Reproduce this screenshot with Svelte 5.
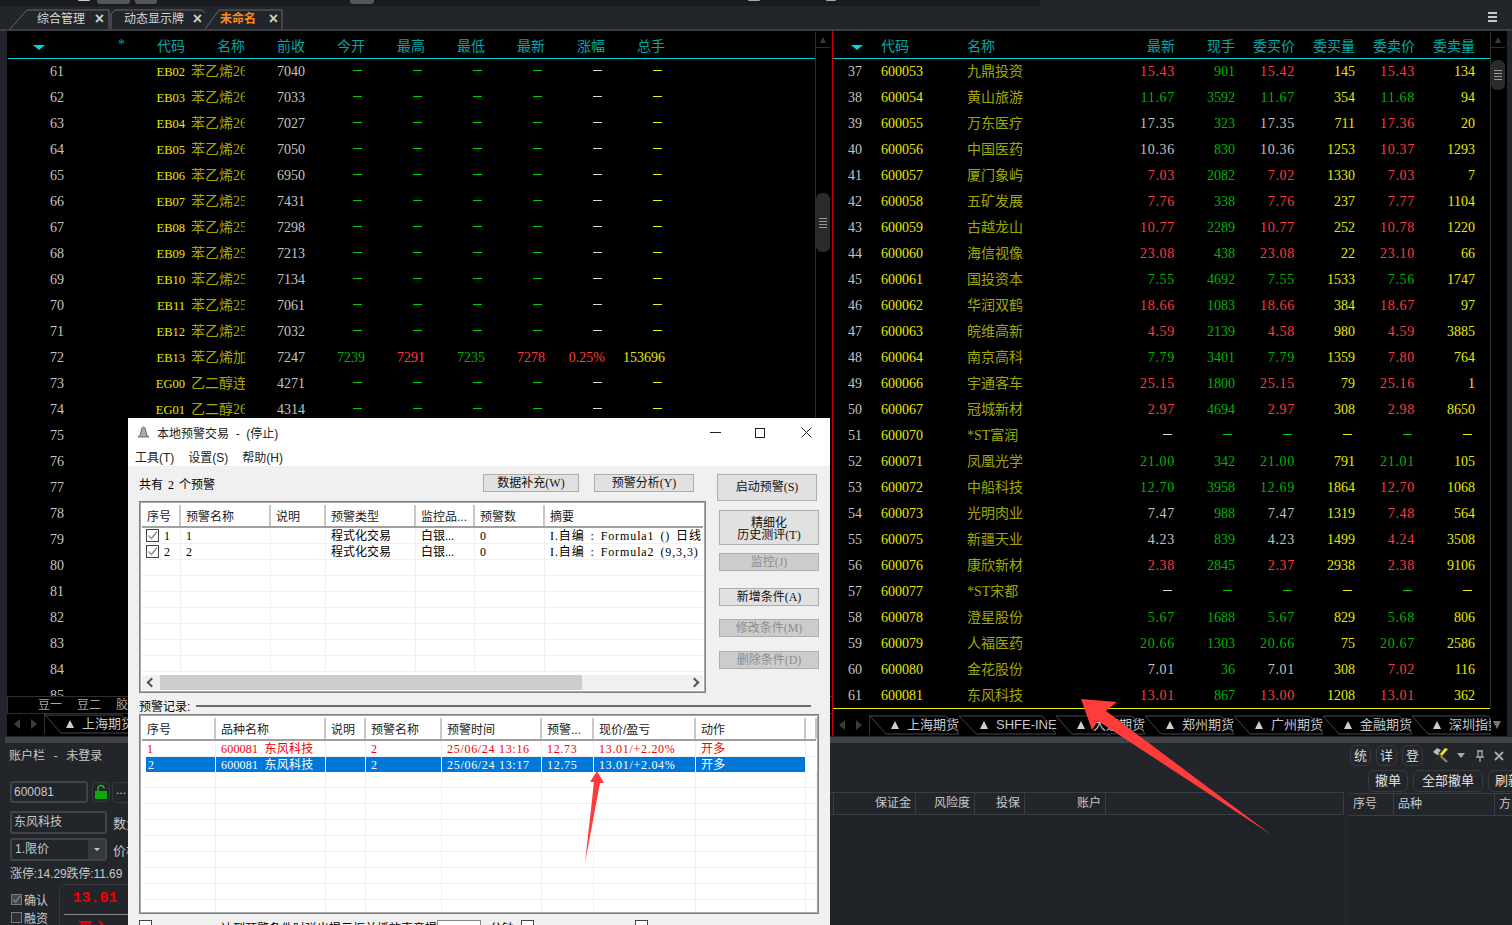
<script>
	const leftPrev = [7040, 7033, 7027, 7050, 6950, 7431, 7298, 7213, 7134, 7061, 7032, 7247, 4271, 4314];
	const leftCodes = ['EB02', 'EB03', 'EB04', 'EB05', 'EB06', 'EB07', 'EB08', 'EB09', 'EB10', 'EB11', 'EB12', 'EB13', 'EG00', 'EG01'];
	const leftNames = ['苯乙烯26', '苯乙烯26', '苯乙烯26', '苯乙烯26', '苯乙烯26', '苯乙烯25', '苯乙烯25', '苯乙烯25', '苯乙烯25', '苯乙烯25', '苯乙烯25', '苯乙烯加', '乙二醇连', '乙二醇26'];
	const leftHead = ['前收', '今开', '最高', '最低', '最新', '涨幅', '总手'];
	const leftRows = Array.from({ length: 25 }, (_, i) => ({
		n: 61 + i,
		code: leftCodes[i],
		name: leftNames[i],
		prev: leftPrev[i]
	}));

	// n, code, name, latest, now, bid, bidVol, ask, askVol, colours of latest/bid/ask
	const rightRows = [
		[37, '600053', '九鼎投资', '15.43', '901', '15.42', '145', '15.43', '134', 'rrr'],
		[38, '600054', '黄山旅游', '11.67', '3592', '11.67', '354', '11.68', '94', 'ggg'],
		[39, '600055', '万东医疗', '17.35', '323', '17.35', '711', '17.36', '20', 'wwr'],
		[40, '600056', '中国医药', '10.36', '830', '10.36', '1253', '10.37', '1293', 'wwr'],
		[41, '600057', '厦门象屿', '7.03', '2082', '7.02', '1330', '7.03', '7', 'rrr'],
		[42, '600058', '五矿发展', '7.76', '338', '7.76', '237', '7.77', '1104', 'rrr'],
		[43, '600059', '古越龙山', '10.77', '2289', '10.77', '252', '10.78', '1220', 'rrr'],
		[44, '600060', '海信视像', '23.08', '438', '23.08', '22', '23.10', '66', 'rrr'],
		[45, '600061', '国投资本', '7.55', '4692', '7.55', '1533', '7.56', '1747', 'ggg'],
		[46, '600062', '华润双鹤', '18.66', '1083', '18.66', '384', '18.67', '97', 'rrr'],
		[47, '600063', '皖维高新', '4.59', '2139', '4.58', '980', '4.59', '3885', 'rrr'],
		[48, '600064', '南京高科', '7.79', '3401', '7.79', '1359', '7.80', '764', 'ggr'],
		[49, '600066', '宇通客车', '25.15', '1800', '25.15', '79', '25.16', '1', 'rrr'],
		[50, '600067', '冠城新材', '2.97', '4694', '2.97', '308', '2.98', '8650', 'rrr'],
		[51, '600070', '*ST富润'],
		[52, '600071', '凤凰光学', '21.00', '342', '21.00', '791', '21.01', '105', 'ggg'],
		[53, '600072', '中船科技', '12.70', '3958', '12.69', '1864', '12.70', '1068', 'ggr'],
		[54, '600073', '光明肉业', '7.47', '988', '7.47', '1319', '7.48', '564', 'wwr'],
		[55, '600075', '新疆天业', '4.23', '839', '4.23', '1499', '4.24', '3508', 'wwr'],
		[56, '600076', '康欣新材', '2.38', '2845', '2.37', '2938', '2.38', '9106', 'rrr'],
		[57, '600077', '*ST宋都'],
		[58, '600078', '澄星股份', '5.67', '1688', '5.67', '829', '5.68', '806', 'ggg'],
		[59, '600079', '人福医药', '20.66', '1303', '20.66', '75', '20.67', '2586', 'ggg'],
		[60, '600080', '金花股份', '7.01', '36', '7.01', '308', '7.02', '116', 'wwr'],
		[61, '600081', '东风科技', '13.01', '867', '13.00', '1208', '13.01', '362', 'rrr']
	];

	const marketTabs = ['上海期货', 'SHFE-INE', '大连期货', '郑州期货', '广州期货', '金融期货', '深圳指数'];
	const alertCols = ['序号', '预警名称', '说明', '预警类型', '监控品...', '预警数', '摘要'];
	const alertRows = [
		['1', '1', '', '程式化交易', '白银...', '0', 'I.自编 : Formula1 () 日线'],
		['2', '2', '', '程式化交易', '白银...', '0', 'I.自编 : Formula2 (9,3,3)']
	];
	const recordCols = ['序号', '品种名称', '说明', '预警名称', '预警时间', '预警...', '现价/盈亏', '动作', ''];
	const recordRows = [
		['1', '600081  东风科技', '', '2', '25/06/24 13:16', '12.73', '13.01/+2.20%', '开多', ''],
		['2', '600081  东风科技', '', '2', '25/06/24 13:17', '12.75', '13.01/+2.04%', '开多', '']
	];
	const blank = (n, cols) => Array.from({ length: n }, () => Array(cols).fill(''));
</script>

{#snippet thumb()}
	<div class="thumb"><i></i><i></i><i></i><i></i></div>
{/snippet}

{#snippet tabStrip(tabs)}
	<div class="mtabs">
		<div class="mnav"><span class="al"></span><span class="ar"></span></div>
		{#each tabs as tab}
			<div class="mtab" class:wide={tab === 'SHFE-INE'}>
				<svg class="mshape" viewBox="0 0 100 20" preserveAspectRatio="none">
					<path d="M0 1H86L100 19H18L0 1" fill="none" stroke="#45474a" vector-effect="non-scaling-stroke" />
				</svg>
				<span class="up"></span>{tab}
			</div>
		{/each}
	</div>
{/snippet}

{#snippet tick()}
	<svg class="tick" width="11" height="11" viewBox="0 0 11 11"><path d="M1.5 5.5L4.5 8.5L10 1.5" fill="none" stroke="#8a8a8a" stroke-width="1.4" /></svg>
{/snippet}

<div class="app">
	<div class="topstrip">
		<span class="bit b1"></span><span class="bit b2"></span><span class="bit b3"></span><span class="bit b4"></span><span class="bit b5"></span><span class="bit b6"></span>
	</div>

	<div class="tabbar">
		<div class="ttab t1">
			<svg class="tshape" viewBox="0 0 100 20"><path d="M0 20L17 1H99V20" fill="none" stroke="#66686c" /></svg>
			综合管理<span class="tx">×</span>
		</div>
		<div class="ttab t2">
			<svg class="tshape" viewBox="0 0 95 20"><path d="M1 20V5L5 1H92L95 4" fill="none" stroke="#66686c" /></svg>
			动态显示牌<span class="tx">×</span>
		</div>
		<div class="ttab t3">
			<svg class="tshape" viewBox="0 0 78 20"><path d="M0 20L14 1H77V20" fill="none" stroke="#66686c" /></svg>
			未命名<span class="tx">×</span>
		</div>
		<div class="burger"><i></i><i></i><i></i></div>
	</div>

	<div class="market">
		<section class="panel left">
			<div class="panel-main">
				<div class="table">
					<div class="lrow head">
						<div class="ccell"><span class="caret"></span></div>
						<div class="star">*</div>
						<div>代码</div>
						<div>名称</div>
						{#each leftHead as h}<div>{h}</div>{/each}
					</div>
					{#each leftRows as row}
						<div class="lrow">
							<div class="num">{row.n}</div>
							<div></div>
							{#if row.code}
								<div class="code">{row.code}</div>
								<div class="name">{row.name}</div>
								<div class="num">{row.prev}</div>
								{#if row.n === 72}
									<div class="g">7239</div>
									<div class="r">7291</div>
									<div class="g">7235</div>
									<div class="r">7278</div>
									<div class="r">0.25%</div>
									<div class="y">153696</div>
								{:else}
									<div><span class="dash dg"></span></div>
									<div><span class="dash dg"></span></div>
									<div><span class="dash dg"></span></div>
									<div><span class="dash dg"></span></div>
									<div><span class="dash dw"></span></div>
									<div><span class="dash dy"></span></div>
								{/if}
							{/if}
						</div>
					{/each}
				</div>
				<div class="scroll">
					<div class="sup"><span></span></div>
					<div class="thumb-slot long">{@render thumb()}</div>
				</div>
			</div>
			<div class="subtabs"><span>豆一</span><span>豆二</span><span>胶</span></div>
			{@render tabStrip(marketTabs.slice(0, 1))}
		</section>

		<div class="redline"></div>

		<section class="panel right">
			<div class="panel-main">
				<div class="table">
					<div class="rrow head">
						<div class="ccell rc"><span class="caret"></span></div>
						<div class="code-h">代码</div>
						<div class="name-h">名称</div>
						<div>最新</div><div>现手</div><div>委买价</div><div>委买量</div><div>委卖价</div><div>委卖量</div>
					</div>
					{#each rightRows as row}
						<div class="rrow">
							<div class="num">{row[0]}</div>
							<div class="code code-c">{row[1]}</div>
							<div class="rname">{row[2]}</div>
							{#if row[3]}
								<div class="p {row[9][0]}">{row[3]}</div>
								<div class="g">{row[4]}</div>
								<div class="p {row[9][1]}">{row[5]}</div>
								<div class="y">{row[6]}</div>
								<div class="p {row[9][2]}">{row[7]}</div>
								<div class="y">{row[8]}</div>
							{:else}
								<div><span class="dash dw"></span></div>
								<div><span class="dash dg"></span></div>
								<div><span class="dash dg"></span></div>
								<div><span class="dash dy"></span></div>
								<div><span class="dash dg"></span></div>
								<div><span class="dash dy"></span></div>
							{/if}
						</div>
					{/each}
				</div>
				<div class="scroll">
					<div class="sup"><span></span></div>
					<div class="thumb-slot short">{@render thumb()}</div>
				</div>
			</div>
			<div class="yellow"></div>
			{@render tabStrip(marketTabs)}
			<span class="more"></span>
		</section>
	</div>

	<div class="splitter"></div>

	<div class="bottom">
		<div class="account">
			<div class="acc-title">账户栏 &nbsp;- &nbsp;未登录</div>
			<div class="acc-row first">
				<div class="field code-f">600081</div>
				<div class="lock">
					<svg width="14" height="16" viewBox="0 0 14 16"><path d="M4 7V4.5a3 3 0 0 1 6 0" fill="none" stroke="#18b818" stroke-width="1.6" /><rect x="1" y="7" width="12" height="8" fill="#0fa80f" /></svg>
				</div>
				<div class="dots">...</div>
			</div>
			<div class="acc-row gap8">
				<div class="field wide">东风科技</div><span class="lbl">数量</span>
			</div>
			<div class="acc-row gap4">
				<div class="field wide picker">1.限价<span class="drop"><i></i></span></div><span class="lbl">价格</span>
			</div>
			<div class="limit">涨停:14.29跌停:11.69</div>
			<div class="acc-foot">
				<div class="checks">
					<label><span class="cb on">{@render tick()}</span>确认</label>
					<label><span class="cb"></span>融资</label>
				</div>
				<div class="pricebox">
					<div class="bigp">13.01</div>
					<div class="buy">买入</div>
				</div>
			</div>
		</div>

		<div class="mid">
			<div class="mid-head">
				<div></div><div>保证金</div><div>风险度</div><div>投保</div><div>账户</div><div></div>
			</div>
			<div class="grid-body"></div>
		</div>

		<div class="side">
			<div class="side-top">
				<span class="rbtn">统</span><span class="rbtn">详</span><span class="rbtn">登</span>
				<svg class="tool" width="17" height="17" viewBox="0 0 17 17">
					<path d="M4 5L15 15" stroke="#8a8a70" stroke-width="2" />
					<path d="M1 5L5 1L9 3L5 8Z" fill="#b8b8b8" />
					<path d="M16 2L13 1L8 7L10 9Z" fill="#f0e020" />
					<path d="M8 8L3 14" stroke="#30301c" stroke-width="2.4" />
				</svg>
				<span class="side-caret"></span>
				<svg width="10" height="12" viewBox="0 0 10 12"><path d="M2 1H8M3 1V7M7 1V7M1 7H9M5 7V12" fill="none" stroke="#aaa" stroke-width="1.3" /></svg>
				<svg width="10" height="10" viewBox="0 0 10 10"><path d="M1 1L9 9M9 1L1 9" stroke="#aaa" stroke-width="1.8" /></svg>
			</div>
			<div class="side-btns">
				<span class="sbtn w40">撤单</span><span class="sbtn w70">全部撤单</span><span class="sbtn w40">刷新</span>
			</div>
			<div class="side-head"><div>序号</div><div>品种</div><div>方向</div></div>
			<div class="grid-body"></div>
		</div>
	</div>

	<div class="dialog">
		<div class="titlebar">
			<div class="title">
				<svg width="13" height="13" viewBox="0 0 13 13"><path d="M6.5 1C5 1 4.6 2.4 4.4 4L3.2 9 1 11H12L9.8 9 8.6 4C8.4 2.4 8 1 6.5 1Z" fill="#a8a8a8" stroke="#555" stroke-width=".8" /></svg>
				<span class="ttext">本地预警交易 &nbsp;- &nbsp;(停止)</span>
				<div class="winbtns">
					<span class="wmin"></span>
					<span class="wmax"></span>
					<svg width="11" height="11" viewBox="0 0 11 11"><path d="M.5 .5L10.5 10.5M10.5 .5L.5 10.5" stroke="#222" /></svg>
				</div>
			</div>
			<div class="menu"><span>工具(T)</span><span>设置(S)</span><span>帮助(H)</span></div>
		</div>

		<div class="dbody">
			<div class="dtop">
				<div class="dleft">
					<div class="count-row">
						<span class="count">共有 2 个预警</span>
						<button class="b b96">数据补充(W)</button>
						<button class="b b100">预警分析(Y)</button>
					</div>
					<div class="listbox alerts">
						<div class="lhead acols">
							{#each alertCols as c}<div>{c}</div>{/each}
						</div>
						<div class="lbody a-body">
							{#each alertRows as r}
								<div class="lr acols">
									<div><span class="chk">{@render tick()}</span>{r[0]}</div>
									{#each r.slice(1, 6) as c}<div>{c}</div>{/each}
									<div class="formula">{r[6]}</div>
								</div>
							{/each}
							{#each blank(7, 7) as r}
								<div class="lr acols">{#each r as c}<div>{c}</div>{/each}</div>
							{/each}
						</div>
						<div class="hbar">
							<span class="ha hl"></span>
							<div class="htrack"><div class="hthumb"></div></div>
							<span class="ha hr"></span>
						</div>
					</div>
				</div>
				<div class="dright">
					<button class="b start">启动预警(S)</button>
					<button class="b fine">精细化<br />历史测评(T)</button>
					<button class="b act off m8">监控(J)</button>
					<button class="b act m17">新增条件(A)</button>
					<button class="b act off m13">修改条件(M)</button>
					<button class="b act off m14">删除条件(D)</button>
				</div>
			</div>

			<div class="rec-label"><span>预警记录:</span><i></i></div>
			<div class="listbox records">
				<div class="lhead rcols">
					{#each recordCols as c}<div>{c}</div>{/each}
				</div>
				<div class="lbody">
					{#each recordRows as r, i}
						<div class="lr rcols" class:red={i === 0} class:sel={i === 1}>
							{#each r as c, j}<div class="cell" class:wide-num={j >= 4 && j <= 6} class:last={j === 8}>{c}</div>{/each}
						</div>
					{/each}
					{#each blank(10, 9) as r}
						<div class="lr rcols">{#each r as c}<div>{c}</div>{/each}</div>
					{/each}
				</div>
			</div>

			<div class="dfoot">
				<span class="fchk"></span>
				<span class="ftext">达到预警条件时弹出提示框并播放声音提示</span>
				<span class="finput"></span>
				<span class="ftext2">分钟</span>
				<span class="fchk c2"></span>
				<span class="fchk c3"></span>
			</div>
		</div>
	</div>

	<!-- red annotation arrows drawn over the screenshot -->
	<svg class="notes" width="1512" height="925" viewBox="0 0 1512 925">
		<path d="M1081 699L1117 702L1106 711L1273 836L1098 721L1092 730Z" fill="#ff3b3b" />
		<path d="M597 771L604 783L600 783L585 863L594 782L590 782Z" fill="#ff3b3b" />
	</svg>
</div>

<style>
	:global(body) {
		margin: 0;
		background: #212429;
	}

	.app {
		position: relative;
		width: 1512px;
		height: 925px;
		overflow: hidden;
		background: #22252a;
		color: #c0c0c0;
		font-family: 'Liberation Serif', 'Noto Sans CJK SC', serif;
		font-size: 14px;
	}

	/* top chrome */
	.topstrip {
		position: relative;
		height: 6px;
		background: linear-gradient(90deg, #191b1f 1040px, #22252a 1040px);
	}

	.bit {
		position: absolute;
		top: 0;
		height: 3px;
		background: #55575a;
		border-radius: 0 0 3px 3px;
	}
	.b1 { left: 78px; width: 12px; height: 1px; background: #ccc; }
	.b2 { left: 97px; width: 33px; height: 4px; }
	.b3 { left: 135px; width: 22px; height: 4px; }
	.b4 { left: 350px; width: 24px; height: 4px; }
	.b5 { left: 748px; width: 12px; height: 1px; background: #aaa; }
	.b6 { left: 826px; width: 10px; height: 1px; background: #aaa; }

	.tabbar {
		display: flex;
		align-items: flex-end;
		box-sizing: border-box;
		height: 25px;
		padding: 3px 0 0 10px;
		border-bottom: 2px solid #3c3e42;
		font-family: 'Liberation Sans', 'Noto Sans CJK SC', sans-serif;
		font-size: 12px;
		color: #d8d8d8;
	}

	.ttab {
		position: relative;
		display: flex;
		align-items: center;
		box-sizing: border-box;
		height: 20px;
		line-height: 20px;
	}
	.t1 { width: 100px; padding-left: 27px; }
	.t2 { width: 95px; padding-left: 14px; }
	.t3 { width: 78px; padding-left: 15px; color: #ff8a1e; font-weight: 700; }

	.tshape {
		position: absolute;
		left: 0;
		top: 0;
		width: 100%;
		height: 100%;
	}

	.tx {
		position: absolute;
		top: 0;
		right: 5px;
		color: #cfcfcf;
		font-size: 16px;
		font-weight: 700;
	}
	.t1 .tx { right: 6px; }
	.t2 .tx { right: 3px; }

	.burger {
		display: flex;
		flex-direction: column;
		gap: 2px;
		margin: 0 15px 7px auto;
	}
	.burger i {
		display: block;
		width: 9px;
		height: 2px;
		background: #c8c8c8;
	}

	/* market tables */
	.market {
		display: flex;
		height: 705px;
		padding-left: 7px;
	}

	.panel {
		position: relative;
		display: flex;
		flex-direction: column;
		background: #000;
		overflow: hidden;
	}
	.panel.left { width: 825px; }
	.panel.right { width: 674px; }

	.redline {
		width: 1px;
		background: #d00000;
	}

	.panel-main {
		display: flex;
		overflow: hidden;
	}
	.left .panel-main { height: 665px; }
	.right .panel-main { height: 677px; }

	.table {
		flex: 1;
		min-width: 0;
		overflow: hidden;
	}

	.lrow,
	.rrow {
		display: grid;
		height: 26px;
		line-height: 26px;
		text-align: right;
		white-space: nowrap;
	}
	.lrow { grid-template-columns: 57px 61px 60px 60px repeat(7, 60px); }
	.rrow { grid-template-columns: 29px 105px 148px repeat(6, 60px); }

	.head {
		height: 28px;
		line-height: 32px;
		box-sizing: border-box;
		border-bottom: 1px solid #00d0d8;
		color: #00a8a8;
	}
	.lrow.head { margin-left: 1px; grid-template-columns: 56px 61px 60px 60px repeat(7, 60px); }

	.ccell {
		display: flex;
		align-items: center;
		padding-left: 25px;
	}
	.ccell.rc {
		padding-left: 18px;
	}

	.caret {
		width: 0;
		height: 0;
		margin-top: 1px;
		border-left: 6px solid transparent;
		border-right: 6px solid transparent;
		border-top: 5px solid #00d8e0;
	}

	.star {
		line-height: 27px;
		padding-right: 0;
	}

	.num { color: #c4c4c4; }
	.code { color: #e8e800; font-size: 12.5px; }
	.name {
		overflow: hidden;
		padding-left: 6px;
		color: #a8a800;
		text-align: left;
	}
	.code-h,
	.code-c { padding-left: 19px; text-align: left; }
	.code-c { font-size: 14px; }
	.name-h,
	.rname {
		text-align: left;
	}
	.rname { color: #a0a800; }

	.p { letter-spacing: .7px; }
	.r { color: #ff3c3c; }
	.g { color: #00b400; }
	.w { color: #c4c4c4; }
	.y { color: #e8e800; }

	.dash {
		display: inline-block;
		width: 9px;
		height: 1px;
		margin-right: 3px;
		vertical-align: 5px;
	}
	.dg { background: #00d000; }
	.dw { background: #d8d8d8; }
	.dy { background: #f0f000; }

	.scroll {
		box-sizing: border-box;
		flex: none;
		width: 17px;
		padding-right: 2px;
		padding-top: 1px;
	}
	.scroll .sup {
		display: flex;
		justify-content: center;
		align-items: center;
		height: 15px;
		border-left: 1px solid #2e2e2e;
		border-bottom: 1px solid #2e2e2e;
	}
	.sup span {
		width: 0;
		height: 0;
		border-left: 3px solid transparent;
		border-right: 3px solid transparent;
		border-bottom: 6px solid #3a3a3a;
	}
	.thumb-slot {
		height: 100%;
		border-left: 1px solid #2e2e2e;
	}
	.thumb-slot.long { padding-top: 145px; }
	.thumb-slot.short { padding-top: 12px; }

	.thumb {
		display: flex;
		flex-direction: column;
		justify-content: center;
		align-items: center;
		gap: 2px;
		border-radius: 6px;
		background: #2a2a2a;
	}
	.long .thumb { height: 59px; }
	.short .thumb { height: 30px; }
	.thumb i {
		display: block;
		width: 8px;
		height: 1px;
		background: #9a9a9a;
	}

	.subtabs {
		display: flex;
		gap: 15px;
		box-sizing: border-box;
		height: 18px;
		padding-left: 30px;
		border: 1px solid #2e2e2e;
		border-right: none;
		font-family: 'Liberation Sans', 'Noto Sans CJK SC', sans-serif;
		font-size: 12px;
		line-height: 16px;
		color: #a8a8a8;
		background: #000;
		position: relative;
	}

	.yellow {
		flex: none;
		height: 1px;
		background: #f0f000;
		margin-right: 17px;
		margin-bottom: 6px;
	}

	.mtabs {
		display: flex;
		height: 20px;
		font-family: 'Liberation Sans', 'Noto Sans CJK SC', sans-serif;
		font-size: 13px;
		color: #c8c8c8;
		overflow: hidden;
	}
	.left .mtabs { padding-left: 1px; }
	.right .mtabs { margin-right: 16px; }

	.mnav {
		flex: none;
		display: flex;
		align-items: center;
		gap: 11px;
		box-sizing: border-box;
		width: 37px;
		padding-left: 6px;
		border-right: 1px solid #333;
	}
	.al,
	.ar {
		width: 0;
		height: 0;
		border-top: 5px solid transparent;
		border-bottom: 5px solid transparent;
	}
	.al { border-right: 6px solid #3c3c3c; }
	.ar { border-left: 6px solid #3c3c3c; }

	.mtab {
		position: relative;
		flex: none;
		display: flex;
		align-items: center;
		box-sizing: border-box;
		width: 89px;
		padding-left: 21px;
		line-height: 20px;
		white-space: nowrap;
	}
	.mtab.wide { width: 97px; }

	.mshape {
		position: absolute;
		left: 0;
		top: 0;
		width: 100%;
		height: 100%;
	}

	.up {
		flex: none;
		width: 0;
		height: 0;
		margin-right: 8px;
		border-left: 4px solid transparent;
		border-right: 4px solid transparent;
		border-bottom: 8px solid #cfcfcf;
	}

	.more {
		position: absolute;
		right: 6px;
		bottom: 7px;
		width: 0;
		height: 0;
		border-left: 4px solid transparent;
		border-right: 4px solid transparent;
		border-top: 8px solid #777;
	}

	.splitter {
		height: 6px;
		margin: 1px 0 0 5px;
		background: #404245;
	}

	/* account area */
	.bottom {
		display: flex;
		height: 182px;
		font-family: 'Liberation Sans', 'Noto Sans CJK SC', sans-serif;
		font-size: 12px;
		color: #c8c8c8;
	}

	.account {
		flex: none;
		width: 128px;
		box-sizing: border-box;
		padding: 5px 0 0 10px;
		overflow: hidden;
	}

	.acc-title {
		height: 16px;
		line-height: 16px;
		margin-left: -1px;
		white-space: nowrap;
		word-spacing: 1px;
	}

	.acc-row {
		display: flex;
		align-items: center;
		white-space: nowrap;
	}
	.acc-row.first { margin-top: 17px; height: 22px; }
	.acc-row.gap8 { margin-top: 8px; height: 23px; }
	.acc-row.gap4 { margin-top: 4px; height: 23px; }

	.field {
		box-sizing: border-box;
		height: 100%;
		padding-left: 2px;
		border: 2px solid #404347;
		border-radius: 3px;
		line-height: 18px;
		background: #22252a;
	}
	.code-f { flex: none; width: 78px; }
	.field.wide { position: relative; flex: none; width: 97px; }
	.picker { padding-left: 3px; }

	.drop {
		position: absolute;
		top: 0;
		right: 0;
		bottom: 0;
		display: flex;
		align-items: center;
		justify-content: center;
		width: 17px;
		background: #35383c;
	}
	.drop i {
		border-left: 3px solid transparent;
		border-right: 3px solid transparent;
		border-top: 3px solid #ccc;
	}

	.lock {
		flex: none;
		display: flex;
		align-items: center;
		justify-content: center;
		box-sizing: border-box;
		width: 18px;
		height: 20px;
		margin-left: 4px;
		border: 1px solid #35383c;
		border-radius: 4px;
	}

	.dots {
		flex: none;
		box-sizing: border-box;
		width: 24px;
		height: 21px;
		margin-left: 2px;
		padding-left: 3px;
		border: 1px solid #35383c;
		border-radius: 4px;
	}

	.lbl { margin-left: 6px; font-size: 13px; }

	.limit {
		height: 16px;
		margin-top: 5px;
		line-height: 16px;
		white-space: nowrap;
		letter-spacing: -.1px;
	}

	.acc-foot {
		display: flex;
		margin-top: 2px;
	}

	.checks {
		flex: none;
		display: flex;
		flex-direction: column;
		gap: 3px;
		width: 49px;
		padding: 8px 0 0 1px;
		box-sizing: border-box;
	}
	.checks label {
		display: flex;
		align-items: center;
		gap: 2px;
		height: 15px;
	}

	.cb {
		box-sizing: border-box;
		flex: none;
		width: 11px;
		height: 11px;
		border: 1px solid #77797c;
		background: #2c2f33;
		overflow: hidden;
	}
	.cb.on {
		background: #44474b;
	}

	.tick {
		display: block;
		width: 100%;
		height: 100%;
	}

	.pricebox {
		flex: 1;
		height: 50px;
		margin-left: 0;
		border: 1px solid #35383c;
		border-right: none;
		border-radius: 6px 0 0 0;
		text-align: center;
		overflow: hidden;
	}

	.bigp {
		height: 29px;
		margin: 0 0 0 4px;
		border-bottom: 1px solid #888;
		padding-right: 2px;
		font-family: 'Liberation Mono', monospace;
		font-size: 15px;
		font-weight: 700;
		line-height: 28px;
		color: #f00000;
	}

	.buy {
		margin-top: 1px;
		font-size: 15px;
		font-weight: 700;
		color: #f00000;
		letter-spacing: 2px;
	}

	.mid {
		display: flex;
		flex-direction: column;
		flex: 1;
		min-width: 0;
		padding-top: 49px;
	}

	.mid-head {
		flex: none;
		display: grid;
		grid-template-columns: 706px 82px 59px 50px 81px 238px;
		height: 23px;
		line-height: 21px;
		box-sizing: border-box;
		border-top: 1px solid #3a3d41;
		border-bottom: 1px solid #3a3d41;
		text-align: right;
	}
	.mid-head div {
		padding-right: 4px;
		border-right: 1px solid #3a3d41;
	}

	.grid-body {
		flex: 1;
		background: #1f2226;
	}

	.side {
		display: flex;
		flex-direction: column;
		flex: none;
		width: 163px;
		margin-left: 5px;
		overflow: hidden;
	}

	.side-top {
		flex: none;
		display: flex;
		align-items: center;
		height: 21px;
		margin-top: 2px;
		padding-left: 1px;
		white-space: nowrap;
	}

	.rbtn {
		flex: none;
		box-sizing: border-box;
		width: 21px;
		height: 21px;
		margin-right: 5px;
		border: 1px solid #37393d;
		border-radius: 6px;
		font-size: 13px;
		line-height: 19px;
		text-align: center;
		color: #ddd;
	}

	.tool { margin: 0 8px 0 4px; }

	.side-caret {
		width: 0;
		height: 0;
		margin-right: 10px;
		border-left: 4px solid transparent;
		border-right: 4px solid transparent;
		border-top: 5px solid #aaa;
	}
	.side-top svg:last-child { margin-left: 9px; }

	.side-btns {
		flex: none;
		display: flex;
		gap: 5px;
		height: 22px;
		margin-top: 4px;
		padding-left: 19px;
	}

	.sbtn {
		flex: none;
		box-sizing: border-box;
		height: 22px;
		border: 1px solid #37393d;
		border-radius: 6px;
		font-size: 13px;
		line-height: 20px;
		text-align: center;
		white-space: nowrap;
		overflow: hidden;
		color: #e0e0e0;
	}
	.w40 { width: 40px; }
	.w70 { width: 70px; }

	.side-head {
		flex: none;
		display: grid;
		grid-template-columns: 45px 101px 40px;
		box-sizing: border-box;
		height: 23px;
		margin-top: 1px;
		border-top: 1px solid #3a3d41;
		border-bottom: 1px solid #3a3d41;
		line-height: 21px;
	}
	.side-head div {
		padding-left: 4px;
		border-right: 1px solid #3a3d41;
	}

	/* floating dialog */
	.dialog {
		position: absolute;
		left: 128px;
		top: 418px;
		width: 702px;
		height: 507px;
		background: #f0f0f0;
		color: #000;
		overflow: hidden;
		font-size: 12px;
	}

	.titlebar {
		height: 48px;
		background: #fff;
		font-family: 'Liberation Sans', 'Noto Sans CJK SC', sans-serif;
		font-size: 12px;
		color: #222;
	}

	.title {
		display: flex;
		align-items: center;
		height: 29px;
		padding-left: 9px;
	}
	.ttext { margin-left: 7px; }

	.winbtns {
		display: flex;
		align-items: center;
		margin-left: auto;
		padding-right: 18px;
	}
	.wmin {
		width: 11px;
		height: 1px;
		margin-right: 34px;
		background: #222;
	}
	.wmax {
		box-sizing: border-box;
		width: 10px;
		height: 10px;
		margin-right: 36px;
		border: 1px solid #222;
	}

	.menu {
		display: flex;
		gap: 14px;
		padding-left: 7px;
		line-height: 23px;
	}

	.dbody {
		padding: 8px 0 0 11px;
	}

	.dtop {
		display: flex;
	}

	.dleft {
		flex: none;
		width: 567px;
	}

	.count-row {
		display: flex;
		align-items: center;
		height: 18px;
	}
	.count {
		width: 344px;
		padding-top: 1px;
		word-spacing: 2px;
	}

	.b {
		box-sizing: border-box;
		display: block;
		margin: 0;
		padding: 0;
		border: 1px solid #adadad;
		background: #e1e1e1;
		color: #111;
		font-family: 'Liberation Serif', 'Noto Sans CJK SC', serif;
		font-size: 12px;
		line-height: 13px;
		text-align: center;
		white-space: nowrap;
	}
	.b96 { width: 96px; height: 18px; }
	.b100 { width: 100px; height: 18px; margin-left: 15px; }

	.dright {
		margin-left: 11px;
	}
	.start { width: 100px; height: 27px; }
	.fine {
		width: 100px;
		height: 35px;
		margin: 9px 0 0 2px;
		padding-top: 2px;
		line-height: 12px;
	}
	.act { width: 100px; height: 18px; margin-left: 2px; }
	.off { background: #ccc; color: #8c8c8c; }
	.m8 { margin-top: 8px; }
	.m17 { margin-top: 17px; }
	.m13 { margin-top: 13px; }
	.m14 { margin-top: 14px; }

	.listbox {
		box-sizing: border-box;
		border: 1px solid #808080;
		padding: 2px;
		background: #fff;
		outline: 1px solid #a8a8a8;
		outline-offset: -2px;
		overflow: hidden;
	}

	.alerts {
		width: 567px;
		height: 192px;
		margin-top: 9px;
	}

	.records {
		width: 680px;
		height: 200px;
	}

	.lhead {
		height: 24px;
		box-sizing: border-box;
		padding-top: 1px;
		border-bottom: 2px solid #a0a0a0;
		font-family: 'Liberation Sans', 'Noto Sans CJK SC', sans-serif;
		color: #222;
	}
	.lhead div {
		height: 21px;
		padding-left: 5px;
		border-right: 2px solid #c8c8c8;
		line-height: 24px;
		overflow: hidden;
		white-space: nowrap;
	}

	.acols {
		display: grid;
		grid-template-columns: 39px 90px 55px 90px 59px 70px 165px;
	}
	.rcols {
		display: grid;
		grid-template-columns: 74px 110px 40px 76px 100px 52px 102px 110px 11px;
	}

	.a-body {
		height: 146px;
		overflow: hidden;
	}

	.lr {
		box-sizing: border-box;
		height: 16px;
		border-bottom: 1px solid #f0f0f0;
		line-height: 16px;
	}
	.lr > div {
		padding-left: 5px;
		border-right: 1px solid #f0f0f0;
		overflow: hidden;
		white-space: pre;
	}
	.lr .cell { letter-spacing: .2px; }
	.lr .wide-num { letter-spacing: .7px; }
	.lr .formula {
		letter-spacing: .9px;
		word-spacing: 2px;
	}

	.chk {
		display: inline-block;
		box-sizing: border-box;
		width: 13px;
		height: 13px;
		margin: 1px 5px 0 -1px;
		border: 1px solid #444;
		vertical-align: top;
		background: #fff;
	}

	.hbar {
		display: flex;
		align-items: center;
		height: 15px;
		margin-top: 1px;
		background: #f0f0f0;
	}
	.ha {
		flex: none;
		width: 18px;
		text-align: center;
	}
	.ha::after {
		content: '';
		display: inline-block;
		width: 5px;
		height: 5px;
		border-left: 2px solid #555;
		border-bottom: 2px solid #555;
		transform: rotate(45deg);
	}
	.ha.hr::after {
		transform: rotate(225deg);
	}
	.htrack {
		flex: 1;
	}
	.hthumb {
		width: 422px;
		height: 15px;
		background: #cdcdcd;
	}

	.rec-label {
		display: flex;
		align-items: center;
		gap: 6px;
		box-sizing: border-box;
		height: 21px;
		padding-top: 4px;
		font-family: 'Liberation Sans', 'Noto Sans CJK SC', sans-serif;
	}
	.rec-label i {
		display: block;
		width: 615px;
		height: 2px;
		background: #6d6d6d;
	}

	.red { color: #f00000; }
	.lr.sel {
		height: 15px;
		border: none;
		background: linear-gradient(90deg, #fff 4px, #0078d7 4px);
		color: #fff;
	}
	.lr.sel > div { border-right-color: #fff; }
	.lr.sel > div:first-child { padding-left: 6px; }
	.lr.sel > .last { background: #fff; border: none; }
	.lr.red > .last { border: none; }

	.dfoot {
		position: relative;
		display: flex;
		align-items: flex-start;
		height: 20px;
		margin-top: 6px;
		line-height: 16px;
	}
	.fchk {
		flex: none;
		box-sizing: border-box;
		width: 13px;
		height: 13px;
		border: 1px solid #444;
		background: #fff;
	}
	.ftext {
		margin: 1px 0 0 69px;
		width: 216px;
		white-space: nowrap;
	}
	.finput {
		flex: none;
		width: 44px;
		height: 20px;
		box-sizing: border-box;
		border: 1px solid #888;
		background: #fff;
	}
	.ftext2 { margin: 1px 7px 0 9px; }
	.fchk.c3 { margin-left: 101px; }

	.notes {
		position: absolute;
		left: 0;
		top: 0;
		pointer-events: none;
	}
</style>
